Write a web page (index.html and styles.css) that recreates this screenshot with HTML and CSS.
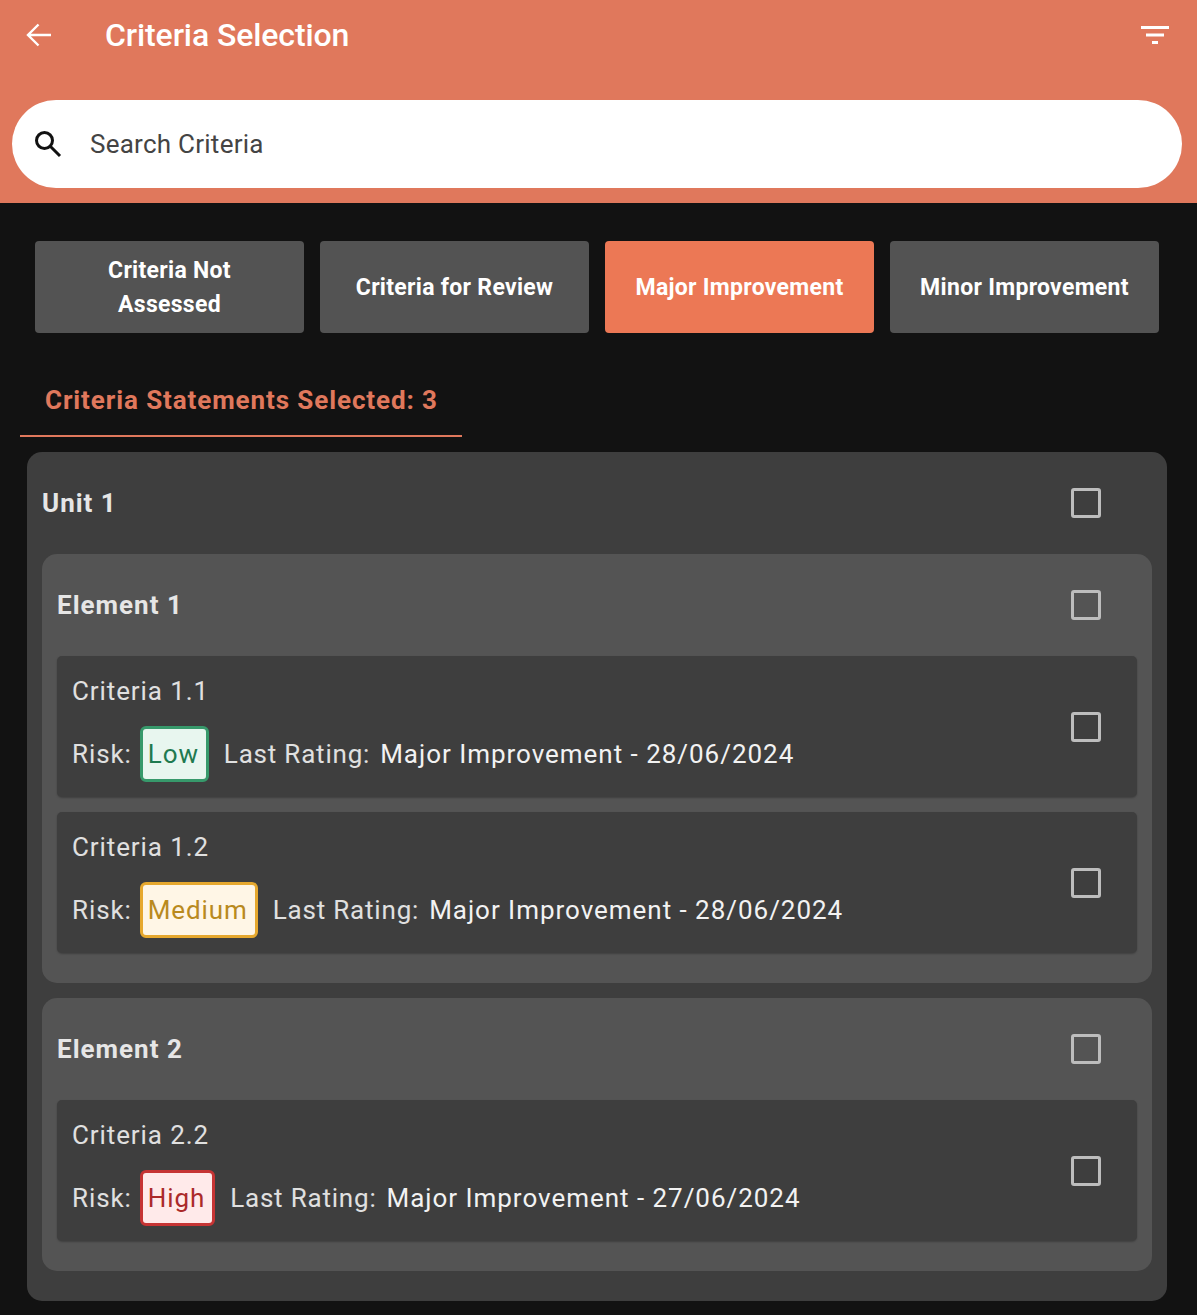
FILE: index.html
```html
<!DOCTYPE html>
<html lang="en">
<head>
<meta charset="utf-8">
<title>Criteria Selection</title>
<link rel="stylesheet" href="styles.css">
</head>
<body>
<header class="appbar">
  <div class="toolbar">
    <svg class="back" viewBox="0 0 26 24" width="26" height="24"><path d="M25 12H2M12.500 1.500 2 12l10.500 10.500" fill="none" stroke="#fff" stroke-width="2.400"/></svg>
    <h1 class="title">Criteria Selection</h1>
    <svg class="filter" viewBox="0 0 28 18" width="28" height="18"><path d="M0 0h28v3H0zM5 7.500h18v3H5zM11 15h6v3h-6z" fill="#fff"/></svg>
  </div>
  <div class="search">
    <svg class="search-icon" viewBox="0 0 28 28" width="28" height="28"><circle cx="10.500" cy="10.500" r="8" fill="none" stroke="#111" stroke-width="3"/><path d="M16.500 16.500 26 26" stroke="#111" stroke-width="3" fill="none"/></svg>
    <span class="search-text">Search Criteria</span>
  </div>
</header>

<main class="content">
  <nav class="tabs">
    <div class="tab">Criteria Not<br>Assessed</div>
    <div class="tab">Criteria for Review</div>
    <div class="tab tab-active">Major Improvement</div>
    <div class="tab">Minor Improvement</div>
  </nav>

  <div class="selected"><span class="selected-label">Criteria Statements Selected: 3</span></div>

  <section class="card unit">
    <div class="head"><span class="head-label">Unit 1</span><span class="check"></span></div>

    <section class="card element">
      <div class="head"><span class="head-label">Element 1</span><span class="check"></span></div>
      <article class="criteria">
        <div class="criteria-body">
          <div class="criteria-title">Criteria 1.1</div>
          <div class="meta"><span class="muted">Risk:</span><span class="pill pill-low">Low</span><span class="muted rating-label">Last Rating:</span><span class="rating">Major Improvement - 28/06/2024</span></div>
        </div>
        <span class="check"></span>
      </article>
      <article class="criteria">
        <div class="criteria-body">
          <div class="criteria-title">Criteria 1.2</div>
          <div class="meta"><span class="muted">Risk:</span><span class="pill pill-medium">Medium</span><span class="muted rating-label">Last Rating:</span><span class="rating">Major Improvement - 28/06/2024</span></div>
        </div>
        <span class="check"></span>
      </article>
    </section>

    <section class="card element">
      <div class="head"><span class="head-label">Element 2</span><span class="check"></span></div>
      <article class="criteria">
        <div class="criteria-body">
          <div class="criteria-title">Criteria 2.2</div>
          <div class="meta"><span class="muted">Risk:</span><span class="pill pill-high">High</span><span class="muted rating-label">Last Rating:</span><span class="rating">Major Improvement - 27/06/2024</span></div>
        </div>
        <span class="check"></span>
      </article>
    </section>
  </section>
</main>
</body>
</html>
```
FILE: styles.css
```css
* { box-sizing: border-box; }
html, body { margin: 0; padding: 0; }
body {
  background: #121212;
  font-family: Roboto, "Liberation Sans", sans-serif;
  color: #e6e6e6;
  height: 1315px;
  overflow: hidden;
}
.appbar {
  background: #e0785c;
  height: 203px;
  padding: 0 15px 0 12px;
}
.toolbar {
  height: 100px;
  display: flex;
  align-items: flex-start;
  padding-top: 23px;
  padding-right: 13px;
}
.back { margin-left: 14px; flex: none; }
.title {
  margin: -7px 0 0 53px;
  font-size: 32px;
  line-height: 38px;
  font-weight: 500;
  letter-spacing: -0.1px;
  color: #fff;
  flex: 1;
}
.filter { margin: 3px 0 0; flex: none; }
.search {
  background: #fff;
  width: 1170px;
  height: 88px;
  border-radius: 44px;
  display: flex;
  align-items: center;
  padding-left: 22px;
}
.search-icon { flex: none; }
.search-text {
  margin-left: 28px;
  font-size: 26px;
  letter-spacing: 0.25px;
  color: #444;
}
.content { padding: 38px 30px 0 20px; }
.tabs {
  display: flex;
  gap: 16px;
  padding-left: 15px;
}
.tab {
  width: 269px;
  height: 92px;
  padding-top: 2px;
  border-radius: 4px;
  background: #535353;
  color: #fff;
  font-size: 23px;
  line-height: 34px;
  font-weight: 700;
  letter-spacing: 0.3px;
  text-align: center;
  display: flex;
  align-items: center;
  justify-content: center;
}
.tab-active { background: #ec7855; }
.selected {
  width: 442px;
  height: 104px;
  padding: 0 0 0 25px;
  margin-bottom: 15px;
  border-bottom: 2px solid #e0785c;
  display: flex;
  align-items: flex-end;
}
.selected-label {
  color: #e0785c;
  font-size: 26px;
  line-height: 30px;
  font-weight: 700;
  letter-spacing: 0.9px;
  padding-bottom: 20px;
}
.card { border-radius: 15px; padding: 0 15px; }
.unit {
  background: #3e3e3e;
  margin-left: 7px;
  width: 1140px;
  padding-bottom: 30px;
}
.element {
  background: #545454;
  padding-bottom: 15px;
}
.element + .element { margin-top: 15px; }
.head {
  height: 102px;
  display: flex;
  align-items: center;
  justify-content: space-between;
}
.head-label {
  font-size: 26px;
  font-weight: 700;
  letter-spacing: 1px;
  color: #e6e6e6;
}
.unit > .head { padding-right: 51px; }
.element > .head { padding-right: 36px; }
.check {
  width: 30px;
  height: 30px;
  border: 3px solid #bdbdbd;
  border-radius: 3px;
  flex: none;
}
.criteria {
  background: #3e3e3e;
  border-radius: 5px;
  padding: 15px 36px 15px 15px;
  margin-bottom: 15px;
  display: flex;
  align-items: center;
  justify-content: space-between;
  box-shadow: 0 1px 2px rgba(0, 0, 0, 0.25);
}
.criteria-title {
  height: 40px;
  line-height: 40px;
  font-size: 26px;
  letter-spacing: 0.9px;
  color: #e0e0e0;
  margin-bottom: 15px;
}
.meta {
  display: flex;
  align-items: center;
  height: 56px;
  font-size: 26px;
  letter-spacing: 0.9px;
}
.muted { color: #e0e0e0; }
.pill {
  height: 56px;
  line-height: 50px;
  margin-left: 8px;
  padding: 0 7px 0 5px;
  border: 3px solid;
  border-radius: 6px;
}
.pill-low { background: #e8f6ef; border-color: #37996b; color: #1f7a50; }
.pill-medium { background: #fff6e6; border-color: #e6a82e; color: #b98a1e; }
.pill-high { background: #ffeaea; border-color: #c63434; color: #ab2a2a; }
.rating-label { margin-left: 15px; letter-spacing: 0.8px; }
.rating { margin-left: 10px; color: #f2f2f2; letter-spacing: 0.97px; }
```
